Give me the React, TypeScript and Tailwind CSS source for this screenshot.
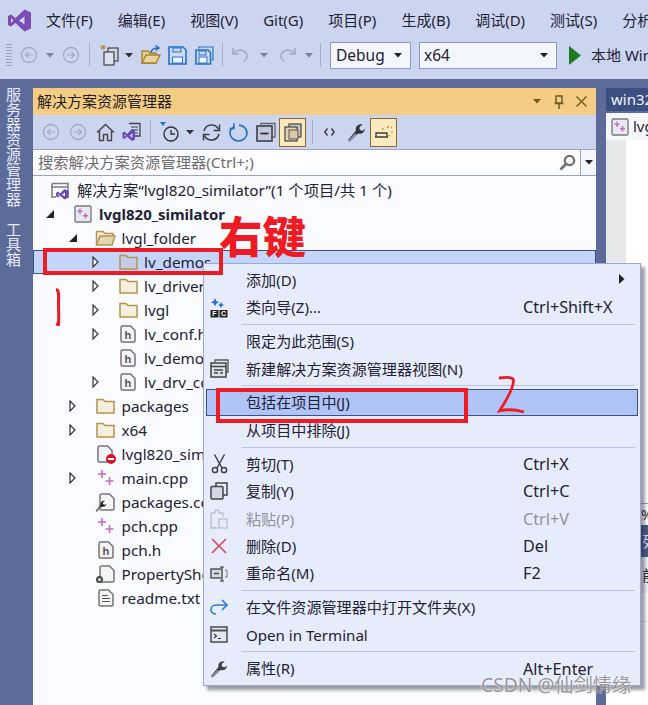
import React from "react";

const FONT = '"Noto Sans","Noto Sans CJK SC",sans-serif';

const Svg = ({ w = 20, h = 20, vb, className = "", children }: { w?: number; h?: number; vb?: string; className?: string; children: React.ReactNode }) => (
  <svg width={w} height={h} viewBox={vb ?? `0 0 ${w} ${h}`} fill="none" className={`shrink-0 ${className}`}>
    {children}
  </svg>
);

const Logo = () => (
  <Svg w={25} h={25} vb="0 0 25 25">
    <path d="M1 8 L4 6.5 L8.5 10 L17.5 1.5 L24 4.5 V20.5 L17.5 23.5 L8.5 15 L4 18.5 L1 17 Z M4 10 V15 L6.5 12.5 Z M12 12.5 L17.5 16.5 V8.5 Z" fill="#7b4bb8" fillRule="evenodd" />
  </Svg>
);

const Circle = ({ dir }: { dir: "l" | "r" }) => (
  <Svg w={18} h={18}>
    <circle cx="9" cy="9" r="7.5" stroke="#a4abc0" strokeWidth="1.3" />
    <path d={dir === "l" ? "M13 9H5.5M8.5 6L5.5 9L8.5 12" : "M5 9H12.5M9.5 6L12.5 9L9.5 12"} stroke="#a4abc0" strokeWidth="1.2" />
  </Svg>
);

const Caret = ({ c = "#333" }: { c?: string }) => (
  <Svg w={8} h={5}>
    <path d="M0 0H8L4 4.5Z" fill={c} />
  </Svg>
);

const Sep = ({ ml, mr, h = 24 }: { ml: number; mr: number; h?: number }) => (
  <div className="w-px bg-[#a4aecb] shrink-0" style={{ marginLeft: ml, marginRight: mr, height: h }} />
);

const Combo = ({ w, label, pad }: { w: string; label: string; pad: string }) => (
  <div className={`${w} h-[27px] mt-[1px] flex items-center justify-between bg-[#f4f6fe] border border-[#8e9bbc] ${pad} pr-[8px] text-[15.5px] text-[#1e2233] shrink-0`}>
    <span>{label}</span>
    <Caret c="#222" />
  </div>
);

const NewProj = () => (
  <Svg w={22} h={22}>
    <path d="M1 3H7M4 1V6M2 1.5L6 5M6 1.5L2 5" stroke="#b8863a" strokeWidth="1" />
    <rect x="9" y="4" width="10" height="13" fill="#cfd5e2" stroke="#444" strokeWidth="1.2" />
    <rect x="5" y="8" width="10" height="13" fill="#dde2ee" stroke="#444" strokeWidth="1.2" />
  </Svg>
);
const OpenF = () => (
  <Svg w={20} h={20}>
    <path d="M1 6H7L9 8H15V18H1Z" fill="#e3cf9c" stroke="#a8812f" strokeWidth="1.3" />
    <path d="M1 18L5 10H19L15 18Z" fill="#e9d69f" stroke="#a8812f" strokeWidth="1.3" />
    <path d="M10 8C10 4 13 3 17 3M14.5 0.5L18 3L14.5 5.5" stroke="#2672c4" strokeWidth="1.5" />
  </Svg>
);
const Save = ({ multi }: { multi?: boolean }) => (
  <Svg w={19} h={19}>
    {multi && <path d="M4 2.5V1H18V14H16.5" stroke="#2672c4" strokeWidth="1.2" />}
    <path d={multi ? "M1 4H13L15.5 6.5V18H1Z" : "M1 1H15L18 4V18H1Z"} stroke="#2672c4" strokeWidth="1.6" fill="#cfdcf6" />
    <rect x={multi ? 4 : 5} y={multi ? 5 : 2} width={multi ? 7 : 8} height="4" fill="#ccd5f0" stroke="#2672c4" />
    <rect x={multi ? 4 : 4.5} y="11" width={multi ? 8 : 10} height="6" fill="#f4f6fe" stroke="#2672c4" />
  </Svg>
);
const Undo = ({ flip }: { flip?: boolean }) => (
  <Svg w={18} h={18} className={flip ? "-scale-x-100" : ""}>
    <path d="M1 2V8H7M1.5 8C4 4 9 3 12.5 5.5C16 8 16 12 12 16" stroke="#a4abc0" strokeWidth="1.6" />
  </Svg>
);
const Home = () => (
  <Svg w={19} h={19}>
    <path d="M1 9.5L9.5 1.5L18 9.5M3.5 8V17.5H7.5V11.5H11.5V17.5H15.5V8" stroke="#444" strokeWidth="1.4" fill="none" />
  </Svg>
);
const VsDoc = () => (
  <Svg w={20} h={20}>
    <path d="M7 1.5H18V14H13" stroke="#444" strokeWidth="1.3" />
    <path d="M9 5H16M9 8H16M12 11H16" stroke="#444" strokeWidth="1.2" />
    <path d="M0.5 10.5L2.5 9.5L5 12L10 7L13 8.5V17.5L10 19L5 14.5L2.5 17L0.5 16Z M2.5 12V15L4 13.5Z M7.5 13.5L10.5 16V11Z" fill="#6f45bb" fillRule="evenodd" />
  </Svg>
);
const History = () => (
  <Svg w={20} h={20}>
    <path d="M0 0H6L3 4Z" fill="#2672c4" />
    <circle cx="11" cy="12" r="7" stroke="#333" strokeWidth="1.4" />
    <path d="M11 8V12H15" stroke="#333" strokeWidth="1.3" />
  </Svg>
);
const Sync = () => (
  <Svg w={19} h={19}>
    <path d="M2 8C3 4 6 2 9.5 2C13 2 15.5 4 16.5 6.5M17 11C16 15 13 17 9.5 17C6 17 3.5 15 2.5 12.5" stroke="#3a3f4a" strokeWidth="1.6" />
    <path d="M17.5 1.5V7.5H11.5M1.5 17.5V11.5H7.5" stroke="#3a3f4a" strokeWidth="1.5" />
  </Svg>
);
const Refresh = () => (
  <Svg w={19} h={19}>
    <path d="M5.5 3.5C2.8 5 1 7.5 1 10C1 14.5 5 18 9.5 18C14 18 18 14.5 18 10C18 5.5 14.5 2.5 10 2.2" stroke="#2672c4" strokeWidth="1.7" />
    <path d="M5 0V5.5H0.5" stroke="#2672c4" strokeWidth="1.5" />
  </Svg>
);
const Collapse = () => (
  <Svg w={20} h={20}>
    <path d="M5 3V1.5H19V15H17" stroke="#666" strokeWidth="1.3" />
    <rect x="1" y="4" width="15" height="15" fill="#c2c8d6" stroke="#3a3f4a" strokeWidth="1.6" />
    <path d="M4.5 11.5H12.5" stroke="#222" strokeWidth="1.6" />
  </Svg>
);
const ShowAll = () => (
  <div className="w-[27px] h-[29px] flex items-center justify-center bg-[#fde9c0] border border-[#8a6a2a] shrink-0">
    <Svg w={18} h={19}>
      <rect x="5" y="1" width="12" height="13" fill="#c9c7c0" stroke="#444" strokeWidth="1.2" />
      <rect x="1" y="4" width="12" height="14" fill="#e2d4ac" stroke="#444" strokeWidth="1.2" />
      <rect x="5" y="7" width="9" height="9" fill="#d7c9a3" stroke="#555" />
    </Svg>
  </div>
);
const Wrench = ({ s = 19, c = "#333" }: { s?: number; c?: string }) => (
  <Svg w={s} h={s} vb="0 0 19 19">
    <path d="M1 17L2.8 18.5L11 10.5C14 11.5 17.5 10 18 6L15 8L12.5 6.5L12.5 4L15.5 1.5C11 0.5 8 4 9 7.5Z" fill={c} />
    <path d="M2 18L9 11" stroke="#8c93a3" strokeWidth="2.2" />
  </Svg>
);
const Preview = () => (
  <div className="w-[27px] h-[29px] flex items-center justify-center bg-[#fde9c0] border border-[#8a6a2a] shrink-0">
    <Svg w={20} h={14}>
      <path d="M1 12H14M2 12V8H13V12" stroke="#3a3f4a" strokeWidth="1.4" />
      <path d="M9 5V3M15 1L13 3M17 7H19M15 10L16 11M17 3L18 2" stroke="#c98a1c" strokeWidth="1.1" />
    </Svg>
  </div>
);
const Code = () => (
  <Svg w={11} h={8}>
    <path d="M3.5 0.5L0.8 4L3.5 7.5M7.5 0.5L10.2 4L7.5 7.5" stroke="#333" strokeWidth="1.3" />
  </Svg>
);
const Search = () => (
  <Svg w={17} h={17}>
    <circle cx="10.5" cy="6.5" r="4.7" stroke="#6f6f6f" strokeWidth="2.2" />
    <path d="M7 10L1.5 15.5" stroke="#6f6f6f" strokeWidth="2.6" />
  </Svg>
);

const Hollow = () => (
  <Svg w={7} h={12}>
    <path d="M1 1L6 6L1 11Z" stroke="#333" strokeWidth="1.2" fill="#fff" />
  </Svg>
);
const Filled = () => (
  <Svg w={8} h={8}>
    <path d="M8 0V8H0Z" fill="#222" />
  </Svg>
);
const Folder = ({ fill = "#f5efdf", w = 19 }: { fill?: string; w?: number }) => (
  <Svg w={w} h={16} vb="0 0 19 16">
    <path d="M1 15V1.5H7L9 3.5H18V15Z" fill={fill} stroke="#b7954c" strokeWidth="1.5" />
  </Svg>
);
const FolderOpen = () => (
  <Svg w={21} h={16}>
    <path d="M1.5 15V1.5H8L10 3.5H18V6" stroke="#b7954c" strokeWidth="1.5" fill="#f5efdf" />
    <path d="M1.5 15L5 6H20L17 15Z" fill="#e3d6b3" stroke="#b7954c" strokeWidth="1.5" />
  </Svg>
);
const Sln = () => (
  <Svg w={19} h={19}>
    <path d="M1 2.5H17V16H12M1 2.5V16H5M1 6H17" stroke="#7d7d7d" strokeWidth="1.6" />
    <path d="M5 12L7 10.5L9 12.5L13.5 8L17.5 10V16.5L13.5 18.5L9 14.5L7 16.5L5 15Z M7 12.5V15L8 13.7Z M11 13.5L14 15.5V11.5Z" fill="#6f45bb" fillRule="evenodd" />
  </Svg>
);
const Plus2 = ({ s = 18 }: { s?: number }) => (
  <Svg w={s} h={s} vb="0 0 18 18">
    <path d="M5 1V9M1 5H9M12.5 8V16M8.5 12H16.5" stroke="#c26cc6" strokeWidth="1.6" />
  </Svg>
);
const Proj = () => (
  <Svg w={18} h={18}>
    <rect x="1" y="1" width="16" height="16" rx="1" fill="#e8e9ee" stroke="#7d7d7d" strokeWidth="1.4" />
    <path d="M6 3.5V9M3.5 6.2H8.5M11.5 8V13.5M9 10.7H14" stroke="#c26cc6" strokeWidth="1.4" />
  </Svg>
);
const Doc = ({ children, w = 16 }: { children?: React.ReactNode; w?: number }) => (
  <Svg w={w} h={18} vb="0 0 16 18">
    <path d="M1 2.5C1 1.5 1.5 1 2.5 1H10.5L15 5.5V15.5C15 16.5 14.5 17 13.5 17H2.5C1.5 17 1 16.5 1 15.5Z" fill="#f4f4f6" stroke="#747474" strokeWidth="1.5" />
    {children}
  </Svg>
);
const HDoc = () => (
  <Doc>
    <text x="4.5" y="14" fontSize="11" fontWeight="700" fill="#555" fontFamily="Liberation Sans">h</text>
  </Doc>
);
const ErrDoc = () => (
  <div className="relative w-[18px] h-[18px]">
    <Doc />
    <div className="absolute right-[-1px] bottom-[-1px] w-[10px] h-[10px] rounded-full bg-[#d9112a] flex items-center justify-center">
      <div className="w-[6px] h-[2px] bg-white" />
    </div>
  </div>
);
const WrenchDoc = () => (
  <div className="relative w-[18px] h-[18px]">
    <div className="ml-[2px]"><Doc /></div>
    <div className="absolute left-[-2px] bottom-[-1px]"><Wrench s={12} c="#222" /></div>
  </div>
);
const GearDoc = () => (
  <div className="relative w-[18px] h-[18px]">
    <div className="ml-[2px]"><Doc /></div>
    <div className="absolute left-[-1px] bottom-[0px] w-[7px] h-[7px] rounded-full bg-[#fafbff] border-2 border-[#444]" />
  </div>
);
const TextDoc = () => (
  <Doc>
    <path d="M4 6.5H10M4 9.5H12M4 12.5H12" stroke="#555" strokeWidth="1.2" />
  </Doc>
);

type Row = { lvl: number; arrow?: "h" | "f"; icon: React.ReactNode; text: string; bold?: boolean; sel?: boolean };
const rows: Row[] = [
  { lvl: 0, arrow: "f", icon: <Proj />, text: "lvgl820_similator", bold: true },
  { lvl: 1, arrow: "f", icon: <FolderOpen />, text: "lvgl_folder" },
  { lvl: 2, arrow: "h", icon: <Folder fill="#c3cde6" />, text: "lv_demos", sel: true },
  { lvl: 2, arrow: "h", icon: <Folder />, text: "lv_drivers" },
  { lvl: 2, arrow: "h", icon: <Folder />, text: "lvgl" },
  { lvl: 2, arrow: "h", icon: <HDoc />, text: "lv_conf.h" },
  { lvl: 2, icon: <HDoc />, text: "lv_demo_conf.h" },
  { lvl: 2, arrow: "h", icon: <HDoc />, text: "lv_drv_conf.h" },
  { lvl: 1, arrow: "h", icon: <Folder />, text: "packages" },
  { lvl: 1, arrow: "h", icon: <Folder />, text: "x64" },
  { lvl: 1, icon: <ErrDoc />, text: "lvgl820_similator.vcxproj" },
  { lvl: 1, arrow: "h", icon: <Plus2 />, text: "main.cpp" },
  { lvl: 1, icon: <WrenchDoc />, text: "packages.config" },
  { lvl: 1, icon: <Plus2 />, text: "pch.cpp" },
  { lvl: 1, icon: <HDoc />, text: "pch.h" },
  { lvl: 1, icon: <GearDoc />, text: "PropertySheet.props" },
  { lvl: 1, icon: <TextDoc />, text: "readme.txt" },
];

const TreeRow = ({ r }: { r: Row }) => (
  <div
    className={`h-[24px] flex items-center text-[#1e2233] whitespace-nowrap ${r.sel ? "bg-[#c4d5fb] border border-[#3b4f81]" : ""} ${r.bold ? "font-bold text-[15px]" : "text-[15.3px]"}`}
    style={{ paddingLeft: (r.sel ? 12 : 13) + r.lvl * 22.5 }}
  >
    <div className="w-[8px] flex justify-center">{r.arrow === "h" ? <Hollow /> : r.arrow === "f" ? <Filled /> : null}</div>
    <div className="w-[20px] ml-[19px] flex justify-center">{r.icon}</div>
    <span className="ml-[6px] mt-[1px]">{r.text}</span>
  </div>
);

const ClassWiz = () => (
  <Svg w={18} h={20}>
    <path d="M5 0L6.3 3L9 4.2L6.3 5.5L5 8.5L3.7 5.5L1 4.2L3.7 3Z" fill="#2672c4" />
    <path d="M11 4L12 6L14 7L12 8L11 10L10 8L8 7L10 6Z" fill="#2672c4" />
    <rect x="0.5" y="12" width="8" height="7.5" fill="#222" />
    <rect x="9.5" y="12" width="8" height="7.5" fill="#222" />
    <text x="2.3" y="18.3" fontSize="7" fontWeight="700" fill="#fff" fontFamily="Liberation Sans">F</text>
    <text x="11" y="18.3" fontSize="7" fontWeight="700" fill="#fff" fontFamily="Liberation Sans">C</text>
  </Svg>
);
const NewView = () => (
  <Svg w={19} h={19}>
    <path d="M5 3V1H18V13H16" stroke="#555" strokeWidth="1.3" />
    <rect x="1" y="4" width="15" height="14" fill="#dfe2ea" stroke="#444" strokeWidth="1.5" />
    <path d="M1 7.5H16M4 11H13M4 14H8M10 14H13" stroke="#444" strokeWidth="1.3" />
  </Svg>
);
const Cut = () => (
  <Svg w={17} h={20}>
    <path d="M3.5 0.5L11 14M13.5 0.5L6 14" stroke="#3a3f4a" strokeWidth="1.5" />
    <circle cx="4" cy="16" r="2.6" stroke="#3a3f4a" strokeWidth="1.5" />
    <circle cx="13" cy="16" r="2.6" stroke="#3a3f4a" strokeWidth="1.5" />
  </Svg>
);
const Copy = () => (
  <Svg w={18} h={18}>
    <path d="M6 4V1H17V13H13" stroke="#444" strokeWidth="1.5" />
    <rect x="1" y="4.5" width="12" height="12.5" rx="1" fill="#d5d9e6" stroke="#444" strokeWidth="1.5" />
  </Svg>
);
const Paste = () => (
  <Svg w={18} h={20}>
    <path d="M1 4H5V2.5C5 1.5 6 1 7 1C8 1 9 1.5 9 2.5V4H13V8M1 4V19H7" stroke="#b9bfcb" strokeWidth="1.3" />
    <rect x="9" y="10" width="8" height="9" stroke="#b9bfcb" strokeWidth="1.3" />
  </Svg>
);
const Del = () => (
  <Svg w={16} h={16}>
    <path d="M1 1L15 15M15 1L1 15" stroke="#dc4a5c" strokeWidth="1.7" />
  </Svg>
);
const Rename = () => (
  <Svg w={18} h={16}>
    <path d="M11 3H1V12H11" stroke="#555" strokeWidth="1.5" fill="#d5d9e6" />
    <path d="M4 7.5H9" stroke="#444" strokeWidth="1.4" />
    <path d="M10 1H14M12 1V15M10 15H14" stroke="#333" strokeWidth="1.2" />
    <path d="M15 4H17V11H15" stroke="#777" strokeWidth="1" />
  </Svg>
);
const Redirect = () => (
  <Svg w={18} h={16}>
    <path d="M17 6H6C3 6 1 8 1 10.5C1 13 3 15 6 15" stroke="#2b7bd6" strokeWidth="1.6" />
    <path d="M12 1L17 6L12 11" stroke="#2b7bd6" strokeWidth="1.6" />
  </Svg>
);
const Term = () => (
  <Svg w={18} h={17}>
    <rect x="1" y="1" width="16" height="15" fill="#e4e6ee" stroke="#555" strokeWidth="1.6" />
    <path d="M1 4.5H17" stroke="#555" strokeWidth="2" />
    <path d="M4 8L6.5 10L4 12M8 12.5H11" stroke="#333" strokeWidth="1.1" />
  </Svg>
);

type MI = { icon?: React.ReactNode; text: string; key?: string; arrow?: boolean; hl?: boolean; dis?: boolean } | "sep";
const menu: MI[] = [
  { text: "添加(D)", arrow: true },
  { icon: <ClassWiz />, text: "类向导(Z)...", key: "Ctrl+Shift+X" },
  "sep",
  { text: "限定为此范围(S)" },
  { icon: <NewView />, text: "新建解决方案资源管理器视图(N)" },
  "sep",
  { text: "包括在项目中(J)", hl: true },
  { text: "从项目中排除(J)" },
  "sep",
  { icon: <Cut />, text: "剪切(T)", key: "Ctrl+X" },
  { icon: <Copy />, text: "复制(Y)", key: "Ctrl+C" },
  { icon: <Paste />, text: "粘贴(P)", key: "Ctrl+V", dis: true },
  { icon: <Del />, text: "删除(D)", key: "Del" },
  { icon: <Rename />, text: "重命名(M)", key: "F2" },
  "sep",
  { icon: <Redirect />, text: "在文件资源管理器中打开文件夹(X)" },
  { icon: <Term />, text: "Open in Terminal" },
  "sep",
  { icon: <Wrench s={18} c="#3a3f4a" />, text: "属性(R)", key: "Alt+Enter" },
];

const ContextMenu = () => (
  <div className="absolute left-[203px] top-[263px] w-[438px] h-[423px] bg-[#e7ecfb] border border-[#9aa8d3] shadow-[4px_4px_3px_rgba(40,40,50,0.45)] pt-[2.5px] px-[2px] text-[15.1px]">
    {menu.map((m, i) =>
      m === "sep" ? (
        <div key={i} className="h-[6.5px] flex items-center pl-[36px] pr-[3px]">
          <div className="h-px w-full bg-[#b9c5e6]" />
        </div>
      ) : (
        <div
          key={i}
          className={`h-[27.4px] flex items-center ${m.hl ? "bg-[#b0c4f8] outline outline-1 -outline-offset-1 outline-[#3b4f81]" : ""} ${m.dis ? "text-[#8f939f]" : "text-[#1e2233]"}`}
        >
          <div className="w-[26px] flex justify-center">{m.icon}</div>
          <span className="ml-[14px] w-[277px] whitespace-nowrap">{m.text}</span>
          {m.key && <span className="whitespace-nowrap text-[16.2px]">{m.key}</span>}
          {m.arrow && (
            <Svg w={6} h={10} className="ml-[96px] mb-[2px]">
              <path d="M0 0L5.5 5L0 10Z" fill="#222" />
            </Svg>
          )}
        </div>
      ),
    )}
  </div>
);

export default function App() {
  return (
    <div className="relative w-[648px] h-[705px] overflow-hidden bg-[#5d6b99]" style={{ fontFamily: FONT }}>
      {/* chrome */}
      <div className="h-[79px] bg-[#ccd5f0] overflow-hidden">
        <div className="h-[40px] flex items-center pl-[7px] text-[15px] text-[#1e2233] whitespace-nowrap">
          <Logo />
          <div className="ml-[14px] flex gap-[25px]">
            <span>文件(F)</span>
            <span>编辑(E)</span>
            <span>视图(V)</span>
            <span>Git(G)</span>
            <span>项目(P)</span>
            <span>生成(B)</span>
            <span>调试(D)</span>
            <span>测试(S)</span>
            <span>分析(N)</span>
          </div>
        </div>
        <div className="h-[30px] flex items-center pl-[6px] whitespace-nowrap">
          <div className="w-[6px] h-[22px] bg-[repeating-linear-gradient(0deg,#99a3c0_0,#99a3c0_1px,transparent_1px,transparent_3px)] shrink-0" />
          <div className="ml-[8px]"><Circle dir="l" /></div>
          <div className="ml-[8px]"><Caret c="#7b8299" /></div>
          <div className="ml-[8px]"><Circle dir="r" /></div>
          <Sep ml={9} mr={9} />
          <NewProj />
          <div className="ml-[4px]"><Caret /></div>
          <div className="ml-[8px]"><OpenF /></div>
          <div className="ml-[7px]"><Save /></div>
          <div className="ml-[8px]"><Save multi /></div>
          <Sep ml={8} mr={9} />
          <Undo />
          <div className="ml-[10px]"><Caret c="#7b8299" /></div>
          <div className="ml-[10px]"><Undo flip /></div>
          <div className="ml-[9px]"><Caret c="#7b8299" /></div>
          <Sep ml={7} mr={9} />
          <Combo w="w-[81px]" label="Debug" pad="pl-[5px]" />
          <div className="ml-[8px]"><Combo w="w-[138px]" label="x64" pad="pl-[4px]" /></div>
          <Svg w={14} h={19} className="ml-[11px]">
            <path d="M1 0L13 9.5L1 19Z" fill="#1f7a1f" />
          </Svg>
          <span className="ml-[9px] text-[15px] text-[#1e2233]">本地 Windows 调试器</span>
        </div>
      </div>

      {/* body */}
      <div className="flex h-[626px]">
        <div className="w-[33px] shrink-0 flex flex-col items-center gap-[15px] text-[15px] leading-[26px] text-[#e6ebfb] pt-[8px] pr-[7px]">
          <span className="[writing-mode:vertical-rl]">服务器资源管理器</span>
          <span className="[writing-mode:vertical-rl]">工具箱</span>
        </div>

        <div className="w-[563px] shrink-0 mt-[9px] flex flex-col bg-[#fafbff]">
          <div className="h-[27px] bg-[#f5cc84] flex items-center pl-[4px] pr-[9px] text-[15px] text-[#1e1e1e]">
            <span>解决方案资源管理器</span>
            <div className="ml-auto flex items-center">
              <Caret c="#6e5a20" />
              <Svg w={10} h={14} className="ml-[13px]">
                <path d="M2 1H8V8H2ZM0.5 8.5H9.5M5 8.5V14" stroke="#6e5a20" strokeWidth="1.5" />
              </Svg>
              <Svg w={11} h={11} className="ml-[12px]">
                <path d="M0.5 0.5L10.5 10.5M10.5 0.5L0.5 10.5" stroke="#6e5a20" strokeWidth="1.4" />
              </Svg>
            </div>
          </div>
          <div className="h-[34px] bg-[#ccd5f0] flex items-center pl-[9px] whitespace-nowrap">
            <Circle dir="l" />
            <div className="ml-[9px]"><Circle dir="r" /></div>
            <div className="ml-[9px]"><Home /></div>
            <div className="ml-[7px]"><VsDoc /></div>
            <Sep ml={8} mr={9} />
            <History />
            <div className="ml-[6px]"><Caret /></div>
            <div className="ml-[8px]"><Sync /></div>
            <div className="ml-[8px]"><Refresh /></div>
            <div className="ml-[8px]"><Collapse /></div>
            <div className="ml-[3px]"><ShowAll /></div>
            <Sep ml={6} mr={11} />
            <Code />
            <div className="ml-[12px]"><Wrench /></div>
            <div className="ml-[4px]"><Preview /></div>
          </div>
          <div className="h-[27px] flex bg-[#fdfdff] border-y border-[#9aa4c2] text-[15.3px] text-[#6d6d6d]">
            <span className="ml-[5px] self-center">搜索解决方案资源管理器(Ctrl+;)</span>
            <div className="ml-auto w-[24px] mr-[1px] flex items-center justify-center"><Search /></div>
            <div className="w-[16px] bg-[#f4f6fe] border-l border-[#9aa4c2] flex items-center justify-center"><Caret c="#222" /></div>
          </div>
          <div className="pt-[2px]">
            <div className="h-[24px] flex items-center pl-[18px] text-[15.3px] text-[#1e2233] whitespace-nowrap">
              <Sln />
              <span className="ml-[7px] mt-[1px]">解决方案“lvgl820_similator”(1 个项目/共 1 个)</span>
            </div>
            {rows.map((r) => (
              <TreeRow key={r.text} r={r} />
            ))}
          </div>
        </div>

        <div className="flex-1 mt-[9px] ml-[10px] flex flex-col overflow-hidden">
          <div className="h-[23px] bg-[#3b4f81] text-[#f2f4fb] text-[15px] pl-[5px] whitespace-nowrap flex items-center">win32</div>
          <div className="h-[2px]" />
          <div className="h-[27px] bg-[#f6f7fd] flex items-center pl-[5px] text-[15px] text-[#1e2233] whitespace-nowrap">
            <Proj />
            <span className="ml-[4px]">lvgl</span>
          </div>
          <div className="h-[363px] bg-white flex">
            <div className="w-[20px] bg-[#e6e7e8]" />
          </div>
          <div className="h-[22px] bg-white border-t border-[#9aa4c2] pl-[35px] text-[14px] text-[#1e2233]">%</div>
          <div className="h-[32px] bg-[#47598d] text-[#e6ebfb] text-[15px] flex items-center pl-[36px] whitespace-nowrap">列</div>
          <div className="h-[36px] bg-[#eef1fa] text-[15px] text-[#1e2233] flex items-center pl-[36px] whitespace-nowrap">前</div>
          <div className="flex-1 bg-white">
            <div className="mt-[28px] h-px bg-[#e0e3ea]" />
          </div>
        </div>
      </div>

      <ContextMenu />

      {/* red annotations */}
      <div className="absolute left-[43px] top-[248px] w-[180px] h-[27px] border-[4px] border-[#ed1c24]" />
      <div className="absolute left-[216px] top-[388px] w-[252px] h-[35px] border-[4px] border-[#ed1c24]" />
      <div className="absolute left-[219px] top-[206px] text-[43.5px] leading-[60px] font-black text-[#ed1c24] whitespace-nowrap">右键</div>
      <div className="absolute left-[54px] top-[288px]">
        <Svg w={8} h={38}>
          <path d="M2 1.5C5.5 2 4.5 8 4.5 14C4.5 22 5 30 4.5 36.5L2 36" stroke="#ed1c24" strokeWidth="3" />
        </Svg>
      </div>
      <div className="absolute left-[497px] top-[376px]">
        <Svg w={30} h={38}>
          <path d="M2 2C10 1 17 1 16.5 5C16 14 9 25 2.5 35C10 33 20 34 27 36" stroke="#ed1c24" strokeWidth="2.8" />
        </Svg>
      </div>

      {/* watermark */}
      <div className="absolute left-[481px] top-[672px] text-[19.2px] leading-[26px] text-[#8a8a8a]/90 whitespace-nowrap [text-shadow:0_0_2px_#fff]">CSDN @仙剑情缘</div>
    </div>
  );
}
